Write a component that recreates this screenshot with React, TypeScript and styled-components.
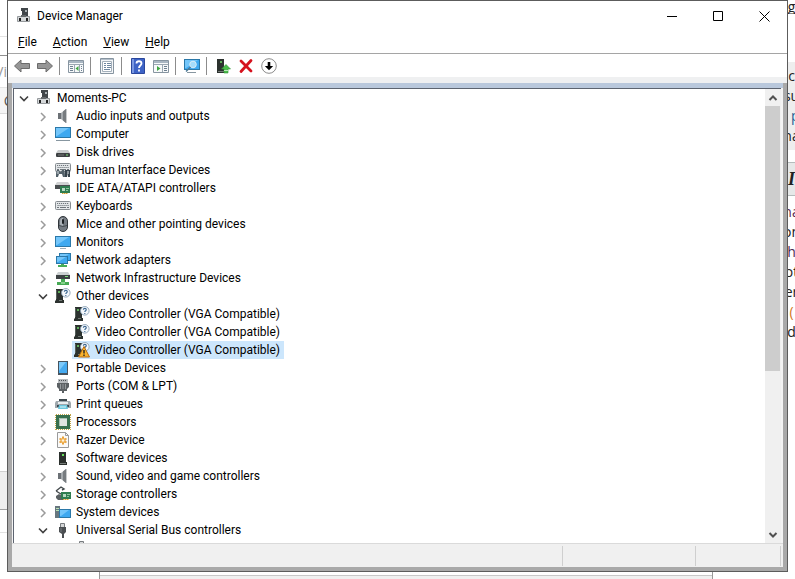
import React from "react";
import styled, { createGlobalStyle, css } from "styled-components";

const GlobalStyle = createGlobalStyle`
  *, *::before, *::after { box-sizing: border-box; }
  body {
    margin: 0;
    background: #fff;
    color: #000;
    font: 12px/18px Roboto, "Open Sans", sans-serif;
  }
  button {
    padding: 0;
    border: 0;
    background: none;
    color: inherit;
    font: inherit;
  }
  ul { margin: 0; padding: 0; list-style: none; }
  svg { display: block; flex: none; }
`;

/* ---------- desktop behind the window ---------- */

const Desktop = styled.div`
  display: grid;
  grid-template:
    "left window right" minmax(0, 1fr)
    "left beneath right" 7px
    / 7px minmax(0, 1fr) 7px;
  height: 100vh;
  overflow: hidden;
`;

const Gutter = styled.div<{ $side: "left" | "right" }>`
  display: flex;
  flex-direction: column;
  grid-area: ${(p) => p.$side};
  overflow: hidden;
`;

const Band = styled.div<{ $h: number; $bg?: string; $line?: string }>`
  display: flex;
  flex: none;
  flex-direction: column;
  justify-content: center;
  align-items: stretch;
  height: ${(p) => p.$h}px;
  background: ${(p) => p.$bg ?? "#fff"};
  border-bottom: ${(p) => (p.$line ? `1px solid ${p.$line}` : "0")};
`;

const Fragment = styled.span<{ $color?: string; $align?: string; $title?: boolean }>`
  display: flex;
  justify-content: ${(p) => p.$align ?? "center"};
  color: ${(p) => p.$color ?? "#222"};
  font: 14px/20px "Open Sans", sans-serif;
  white-space: nowrap;
  ${(p) =>
    p.$title &&
    css`
      font: italic bold 18px/20px "Liberation Serif", serif;
    `}
`;

const Beneath = styled.div`
  grid-area: beneath;
  margin: 0 75px 0 92px;
  border: solid #999;
  border-width: 0 1px;
  padding-top: 3px;
`;

const BeneathBar = styled.div`
  height: 4px;
  border-top: 1px solid #c8c8c8;
  background: #f0f0f0;
`;

/* ---------- window ---------- */

const Window = styled.main`
  display: flex;
  flex-direction: column;
  grid-area: window;
  min-height: 0;
  border: 1px solid #5c5c5c;
  background: #fff;
`;

const TitleBar = styled.header`
  display: flex;
  align-items: center;
  flex: none;
  gap: 5px;
  height: 30px;
  padding-left: 8px;
`;

const Title = styled.h1`
  flex: 1;
  margin: 0;
  font-size: 12px;
  font-weight: 400;
`;

const Caption = styled.div`
  display: flex;
  align-self: stretch;
`;

const CaptionButton = styled.button`
  display: grid;
  place-items: center;
  width: 46px;
`;

const MenuBar = styled.nav`
  display: flex;
  flex: none;
  align-items: center;
  gap: 16px;
  height: 23px;
  padding-left: 10px;
  border-bottom: 1px solid #a5a5a5;
`;

const MenuItem = styled.button`
  &::first-letter { text-decoration: underline; }
`;

const ToolBar = styled.div`
  display: flex;
  flex: none;
  align-items: center;
  height: 29px;
  padding: 0 2px;
  border-bottom: 6px solid #eff0f1;
`;

const Tool = styled.button`
  display: grid;
  place-items: center;
  width: 23px;
  height: 23px;
`;

const ToolDivider = styled.span`
  width: 1px;
  height: 18px;
  margin: 0 4px 0 3px;
  background: #8c8c8c;
`;

const Frame = styled.div`
  display: flex;
  flex: 1;
  flex-direction: column;
  min-height: 0;
  padding: 0 4px 4px;
  background: #a9a9a9;
`;

const Pane = styled.div`
  display: flex;
  flex: 1;
  min-height: 0;
  padding: 0 2px 0 1px;
  border-top: 5px solid #b9c8dc;
  background: #f4f4f4;
`;

const TreeBox = styled.div`
  display: flex;
  flex: 1;
  min-width: 0;
  border: solid #5d6470;
  border-width: 1px 0 0 1px;
  background: #fff;
`;

const Tree = styled.ul`
  flex: 1;
  min-width: 0;
  overflow: hidden;
`;

const TreeRow = styled.li<{ $level: number }>`
  display: flex;
  height: 18px;
  padding-left: ${(p) => p.$level * 19}px;
`;

const Expander = styled.button`
  display: grid;
  place-items: center;
  width: 20px;
  padding-top: 2px;
`;

const ExpanderSpace = styled.span`
  width: 20px;
`;

const Node = styled.span<{ $selected?: boolean }>`
  display: flex;
  align-items: center;
  gap: 5px;
  padding: 0 4px 0 2px;
  background: ${(p) => (p.$selected ? "#cce6fc" : "transparent")};
  white-space: nowrap;
`;

const ScrollBar = styled.div`
  display: flex;
  flex: none;
  flex-direction: column;
  width: 16px;
  background: #f0f0f0;
`;

const ScrollButton = styled.button`
  display: grid;
  flex: none;
  place-items: center;
  height: 17px;
`;

const Track = styled.div`
  flex: 1;
  min-height: 0;
`;

const Thumb = styled.div`
  width: 15px;
  height: 63%;
  background: #cdcdcd;
`;

const StatusBar = styled.footer`
  display: grid;
  grid-template-columns: minmax(0, 1fr) 133px 85px;
  flex: none;
  height: 24px;
  padding: 2px 2px 1px 0;
  border-top: 1px solid #dadada;
  background: #f0f0f0;
`;

const StatusCell = styled.span`
  border-right: 1px solid #cfcfcf;
`;

/* ---------- icons ---------- */

const Icon = ({ children, size = 16 }: { children: React.ReactNode; size?: number }) => (
  <svg width={size} height={size} viewBox="0 0 16 16" aria-hidden="true">
    {children}
  </svg>
);

const Screen = ({ x, y, w, h }: { x: number; y: number; w: number; h: number }) => (
  <>
    <rect x={x + 0.5} y={y + 0.5} width={w - 1} height={h - 1} fill="#3fa9f0" stroke="#2b78a8" />
    <path d={`M${x + 1} ${y + 1}h${w - 3}L${x + 2} ${y + h - 2}h-1z`} fill="#74c6fa" />
  </>
);

const Tower = () => (
  <>
    <path d="M1 1h7v11h1v3H0v-2l1-1z" fill="#2c322f" />
    <path d="M1.500 2v9" stroke="#56605a" />
    <path d="M3 3h2v2H3z" fill="#5fae5a" />
    <path d="M4 12h3v1H4z" fill="#737b76" />
  </>
);

const Question = () => (
  <>
    <circle cx="10.800" cy="4.800" r="4.300" fill="#f4f8fc" stroke="#8ba1b4" strokeWidth=".9" />
    <path d="M9.300 3.700c.1-1.800 3-1.800 3 0 0 1.100-1.500 1.100-1.500 2.300M10.800 6.900v1" fill="none" stroke="#3c6791" strokeWidth="1.100" />
  </>
);

const Drive = ({ y = 6 }: { y?: number }) => (
  <>
    <path d={`M3 ${y}h10l2 3H1z`} fill="#c9cccd" />
    <rect x="1" y={y + 3} width="14" height="4" rx="1" fill="#3c4042" />
    <path d={`M3 ${y + 5}h6`} stroke="#777" />
    <path d={`M11 ${y + 4.5}h2v1h-2z`} fill="#7ee07a" />
  </>
);

const Keys = ({ y }: { y: number }) => (
  <>
    <rect x=".5" y={y + 0.5} width="15" height="8" rx="1" fill="#e4e7e9" stroke="#868c91" />
    <path
      d={`M2 ${y + 2.5}h12M2.500 ${y + 4.5}h12`}
      stroke="#6f767c"
      strokeDasharray="1.200 .8"
    />
    <path d={`M2 ${y + 6.5}h2m1 0h6m1 0h2`} stroke="#6f767c" />
  </>
);

const Board = ({ x, y }: { x: number; y: number }) => (
  <>
    <rect x={x} y={y} width="10" height="7" fill="#2f7d50" />
    <path d={`M${x + 2} ${y + 2}h3v3h-3z`} fill="#b8d9c4" />
    <path d={`M${x + 6} ${y + 2.5}h3M${x + 6} ${y + 4.5}h2`} stroke="#8cc59d" />
    <path d={`M${x + 2} ${y + 7.5}h6`} stroke="#d9a032" strokeDasharray="1.500 .5" />
  </>
);

const icons: Record<string, React.ReactNode> = {
  pc: (
    <>
      <path d="M5 0h7v9H6V3H5z" fill="#41464a" />
      <path d="M9 2h2v2H9z" fill="#a9b0b3" />
      <path d="M1.500 8.500h12v5h-12z" fill="#d5d8da" stroke="#95999c" />
      <path d="M3 10h2v3H3zM10 10h2v3h-2z" fill="#222" />
      <path d="M5 7h5v2H5z" fill="#65696c" />
    </>
  ),
  speaker: (
    <>
      <path d="M3 5h3v6H3z" fill="#6c7176" />
      <path d="M6 5l5-4v14l-5-4z" fill="#a5aaae" />
      <path d="M8 3.500L11 1v14L8 12.500z" fill="#777c80" />
      <path d="M11.500 1v14" stroke="#c7cacc" />
    </>
  ),
  computer: (
    <>
      <Screen x={0} y={1} w={16} h={11} />
      <path d="M1 14.500h14" stroke="#8796a0" />
    </>
  ),
  disk: <Drive />,
  hid: (
    <>
      <Keys y={1} />
      <path d="M1 15c0-7 1-8 3-7l1 2h1l1-2c2-1 3 0 3 7H8l-1-3H4l-1 3z" fill="#53616a" />
      <path d="M10 8h5v7h-2l-1-4v4h-2z" fill="#36434c" />
      <path d="M3 9v3M13 9v3" stroke="#e1e7ea" />
    </>
  ),
  ide: (
    <>
      <path d="M2 2h11l2 3H0z" fill="#d0d2d3" />
      <path d="M0 5h15v4H0z" fill="#4a4e50" />
      <Board x={5} y={6} />
    </>
  ),
  keyboard: <Keys y={3} />,
  mouse: (
    <>
      <rect x="3.500" y=".5" width="9" height="15" rx="4.500" fill="#747b82" stroke="#30353a" />
      <path d="M5 8c0-4 0-6 3-6v8c-2 0-3-1-3-2z" fill="#a9b0b6" />
      <rect x="7" y="3" width="2" height="5" rx="1" fill="#1e2225" />
      <path d="M4 9.500q4 2 8 0" fill="none" stroke="#454b50" />
    </>
  ),
  monitor: (
    <>
      <Screen x={0} y={2} w={16} h={11} />
      <path d="M5 14.500h6" stroke="#9dadb7" />
    </>
  ),
  network: (
    <>
      <Screen x={4} y={1} w={12} h={8} />
      <Screen x={1} y={4} w={12} h={8} />
      <path d="M6 12h3v1h3v2H3v-2h3z" fill="#47ad58" />
    </>
  ),
  infra: (
    <>
      <path d="M3 2h10l2 3H1z" fill="#cbd0d1" />
      <path d="M1 5h14v4H1z" fill="#3c4143" />
      <path d="M10 6.500h3" stroke="#7ee07a" />
      <path d="M6 9h4v3h4v3H2v-3h4z" fill="#46a954" />
      <path d="M6 12h4v2H6z" fill="#84d18b" />
    </>
  ),
  unknown: (
    <>
      <Tower />
      <Question />
    </>
  ),
  warning: (
    <>
      <Tower />
      <Question />
      <path d="M10 4.500L15.500 15h-11z" fill="#f9b32c" stroke="#b4690e" strokeLinejoin="round" />
      <path d="M10 8v3.500M10 12.500v1.500" stroke="#222" strokeWidth="1.400" />
    </>
  ),
  portable: (
    <>
      <rect x="3.500" y="1.500" width="9" height="13" fill="#45aaf0" stroke="#46535e" />
      <path d="M4 2h7L4 11z" fill="#7cc9fa" />
      <path d="M4 13.500h8" stroke="#46535e" />
    </>
  ),
  ports: (
    <>
      <path d="M3 1h10v4H3z" fill="#b6babd" />
      <path d="M4 2.500h8" stroke="#4e5356" strokeDasharray="1 1" />
      <path d="M2 5h12v4l-2 2v2H9v2H7v-2H4v-2L2 9z" fill="#5c6164" />
      <path d="M5.500 6v5M8 6v5M10.500 6v5" stroke="#969b9e" />
    </>
  ),
  printer: (
    <>
      <path d="M4 3h8v3H4z" fill="#3e494f" />
      <path d="M1 5h14l1 2v5H0V7z" fill="#9fa8ad" />
      <path d="M3 6h10v2H3z" fill="#e9eef0" />
      <path d="M2 9h12v2H2z" fill="#39454c" />
      <path d="M4 9h8l1 4H3z" fill="#6bc7dd" />
      <path d="M5 11h6" stroke="#e0f6fb" />
    </>
  ),
  cpu: (
    <>
      <path d="M.5 1v15M15.500 1v15M1 .5h15M1 15.500h15" stroke="#c0a345" strokeDasharray="1 1" />
      <rect x="1" y="1" width="14" height="14" fill="#37704e" />
      <rect x="4" y="4" width="8" height="8" fill="#dfe4e1" />
      <path d="M4.500 12V4.500H12" fill="none" stroke="#a8c0b0" />
    </>
  ),
  gear: (
    <>
      <path d="M2.500.5h8l3 3v12h-11z" fill="#fafafa" stroke="#9a9a9a" />
      <path d="M10.500.5v3h3" fill="none" stroke="#9a9a9a" />
      <path d="M8 4.500v8M4.500 6.500l7 4M11.500 6.500l-7 4" stroke="#e7a13b" strokeWidth="2" />
      <circle cx="8" cy="8.500" r="2.600" fill="#eeb052" />
      <circle cx="8" cy="8.500" r="1.200" fill="#fff3dc" />
    </>
  ),
  software: (
    <>
      <path d="M4 2h7v10h1v3H4z" fill="#2b302d" />
      <path d="M7 4h2v2H7z" fill="#69e05c" />
      <path d="M5 13.500h6" stroke="#777d79" />
    </>
  ),
  storage: (
    <>
      <path d="M1 5l5-4 3 2-2 1M1 5l5 3 2-1" fill="none" stroke="#444a4d" strokeWidth="1.400" />
      <path d="M1 10l3-2 5 3v3H3l-2-2z" fill="#5a6063" />
      <Board x={6} y={6} />
    </>
  ),
  system: (
    <>
      <path d="M0 2h5v12H0z" fill="#68777f" />
      <path d="M1 4.500h3M1 6.500h3" stroke="#b6e2b4" />
      <Screen x={4} y={5} w={12} h={9} />
    </>
  ),
  usb: (
    <>
      <path d="M5.500 1.500h4v4h-4z" fill="#d5d7d8" stroke="#777b7e" />
      <path d="M4 5h7v5l-2 2v4H7v-4l-3-2z" fill="#4b4f52" />
      <path d="M6 6v4" stroke="#777c80" />
    </>
  ),
  back: (
    <path d="M.5 8L7 2v3.500h8.500v5H7V14z" fill="#969696" stroke="#6b6b6b" strokeLinejoin="round" />
  ),
  forward: (
    <path d="M15.500 8L9 2v3.500H.5v5H9V14z" fill="#969696" stroke="#6b6b6b" strokeLinejoin="round" />
  ),
  showTree: (
    <>
      <path d="M.5 2.500h15v12H.5z" fill="#f7f9fa" stroke="#8795a1" />
      <path d="M1 3h14v2H1z" fill="#a9b6c2" />
      <path d="M1 6.500h14M6.500 7v7M11.500 7v7" stroke="#9aa7b2" />
      <path d="M2 8.500h3M2 10.500h3M2 12.500h3M13 8.500h1M13 10.500h1M13 12.500h1" stroke="#6d7f90" />
      <path d="M10.500 8v5L7.500 10.500z" fill="#3ea640" />
    </>
  ),
  properties: (
    <>
      <path d="M1.500.5h13v15h-13z" fill="#f4f6f8" stroke="#8795a1" />
      <path d="M3.500 3.500h9v10h-9z" fill="#fff" stroke="#a4b0bb" />
      <path d="M5 5.500h2m1 0h4M5 7.500h2m1 0h4M5 9.500h2m1 0h4M5 11.500h6" stroke="#6f87a0" />
      <path d="M2 1.500h12" stroke="#b4bfca" />
    </>
  ),
  help: (
    <>
      <path d="M1.500.5h13v15h-13z" fill="#3d63c6" stroke="#2b479c" />
      <path d="M2 1h2v14H2z" fill="#7a98e2" />
      <path d="M6.500 5.500c0-3 5-3 5 0 0 2-2.500 2-2.500 4.500M9 11.500v2" fill="none" stroke="#fff" strokeWidth="1.800" />
    </>
  ),
  action: (
    <>
      <path d="M.5 2.500h15v12H.5z" fill="#f7f9fa" stroke="#8795a1" />
      <path d="M1 3h14v2H1z" fill="#a9b6c2" />
      <path d="M1 6.500h14M9.500 7v7" stroke="#9aa7b2" />
      <path d="M11 8.500h3M11 10.500h3M11 12.500h3" stroke="#6d7f90" />
      <path d="M4 8v5l3.500-2.500z" fill="#3ea640" />
    </>
  ),
  scan: (
    <>
      <Screen x={0} y={1} w={16} h={11} />
      <path d="M3 14.500h9" stroke="#8796a0" />
      <circle cx="9" cy="6.500" r="3.300" fill="#a5dcfb" stroke="#d8ecf7" />
      <path d="M6.500 9L2 13.500" stroke="#4c7895" strokeWidth="1.500" />
    </>
  ),
  update: (
    <>
      <path d="M2 1h7v11h1v3H2z" fill="#2c322f" />
      <path d="M5 3h2v2H5z" fill="#5fae5a" />
      <path d="M3 13.500h6" stroke="#777d79" />
      <path d="M11 6.500l4.500 4.500H13v4H9v-4H6.500z" fill="#4bbd4b" stroke="#2f9434" strokeWidth=".6" />
      <path d="M9 12.500h4" stroke="#b8edb6" />
    </>
  ),
  remove: <path d="M3 3l10 10M13 2.500L3 13.500" stroke="#d5121e" strokeWidth="2.800" strokeLinecap="round" />,
  disable: (
    <>
      <circle cx="8" cy="8" r="7.300" fill="#fff" stroke="#8b8b8b" />
      <path d="M8 4v4.500" stroke="#000" strokeWidth="2.600" />
      <path d="M3.800 8h8.400L8 12.200z" fill="#000" />
    </>
  ),
};

const ChevronRight = () => (
  <svg width="8" height="10" viewBox="0 0 8 10" aria-hidden="true">
    <path d="M2 1l4 4-4 4" fill="none" stroke="#9b9b9b" strokeWidth="1.500" />
  </svg>
);

const ChevronDown = () => (
  <svg width="10" height="8" viewBox="0 0 10 8" aria-hidden="true">
    <path d="M1 1.500l4 4 4-4" fill="none" stroke="#404040" strokeWidth="1.600" />
  </svg>
);

const ScrollArrow = ({ up }: { up?: boolean }) => (
  <svg width="10" height="8" viewBox="0 0 10 8" aria-hidden="true">
    <path d={up ? "M1.500 6L5 2.500 8.500 6" : "M1.500 2L5 5.500 8.500 2"} fill="none" stroke="#505050" strokeWidth="2" />
  </svg>
);

/* ---------- data ---------- */

type Device = { label: string; icon: string; level: number; open?: boolean; selected?: boolean };

const category = (label: string, icon: string, open = false): Device => ({ label, icon, level: 1, open });
const vga = "Video Controller (VGA Compatible)";

const devices: Device[] = [
  { label: "Moments-PC", icon: "pc", level: 0, open: true },
  category("Audio inputs and outputs", "speaker"),
  category("Computer", "computer"),
  category("Disk drives", "disk"),
  category("Human Interface Devices", "hid"),
  category("IDE ATA/ATAPI controllers", "ide"),
  category("Keyboards", "keyboard"),
  category("Mice and other pointing devices", "mouse"),
  category("Monitors", "monitor"),
  category("Network adapters", "network"),
  category("Network Infrastructure Devices", "infra"),
  category("Other devices", "unknown", true),
  { label: vga, icon: "unknown", level: 2 },
  { label: vga, icon: "unknown", level: 2 },
  { label: vga, icon: "warning", level: 2, selected: true },
  category("Portable Devices", "portable"),
  category("Ports (COM & LPT)", "ports"),
  category("Print queues", "printer"),
  category("Processors", "cpu"),
  category("Razer Device", "gear"),
  category("Software devices", "software"),
  category("Sound, video and game controllers", "speaker"),
  category("Storage controllers", "storage"),
  category("System devices", "system"),
  category("Universal Serial Bus controllers", "usb", true),
  { label: "", icon: "usb", level: 2 },
];

const toolGroups: [string, string][][] = [
  [["back", "Back"], ["forward", "Forward"]],
  [["showTree", "Show or hide console tree"]],
  [["properties", "Properties"]],
  [["help", "Help"], ["action", "Show or hide action pane"]],
  [["scan", "Scan for hardware changes"]],
  [["update", "Update driver"], ["remove", "Uninstall device"], ["disable", "Disable device"]],
];

export default function App() {
  return (
    <>
      <GlobalStyle />
      <Desktop>
        <Gutter $side="left" aria-hidden="true">
          <Band $h={37} $line="#e2e2e2" />
          <Band $h={19} $line="#8f8f8f" />
          <Band $h={32} $line="#e4e4e4">
            <Fragment $color="#999" $align="flex-end">Vi</Fragment>
          </Band>
          <Band $h={26} $bg="#f5f5f5" $line="#dcdcdc">
            <Fragment $color="#555" $align="flex-start">&nbsp;C</Fragment>
          </Band>
          <Band $h={358} $line="#d0d0d0" />
          <Band $h={38} $bg="#eeeeee" $line="#a0a0a0" />
          <Band $h={23} $line="#e2e2e2" />
        </Gutter>

        <Window>
          <TitleBar>
            <Icon>{icons.pc}</Icon>
            <Title>Device Manager</Title>
            <Caption>
              <CaptionButton aria-label="Minimize">
                <svg width="11" height="11" viewBox="0 0 11 11">
                  <path d="M0 5.500h10" stroke="#000" />
                </svg>
              </CaptionButton>
              <CaptionButton aria-label="Maximize">
                <svg width="11" height="11" viewBox="0 0 11 11">
                  <path d="M.5.5h9v9h-9z" fill="none" stroke="#000" />
                </svg>
              </CaptionButton>
              <CaptionButton aria-label="Close">
                <svg width="11" height="11" viewBox="0 0 11 11">
                  <path d="M.5.5l10 10M10.500.5l-10 10" stroke="#000" />
                </svg>
              </CaptionButton>
            </Caption>
          </TitleBar>

          <MenuBar aria-label="Menu">
            {["File", "Action", "View", "Help"].map((name) => (
              <MenuItem key={name}>{name}</MenuItem>
            ))}
          </MenuBar>

          <ToolBar role="toolbar">
            {toolGroups.map((group, i) => (
              <React.Fragment key={group[0][0]}>
                {i > 0 && <ToolDivider />}
                {group.map(([icon, label]) => (
                  <Tool key={icon} aria-label={label}>
                    <Icon>{icons[icon]}</Icon>
                  </Tool>
                ))}
              </React.Fragment>
            ))}
          </ToolBar>

          <Frame>
            <Pane>
              <TreeBox>
                <Tree role="tree">
                  {devices.map((d, i) => (
                    <TreeRow key={i} $level={d.level} role="treeitem" aria-selected={!!d.selected}>
                      {d.level < 2 ? (
                        <Expander aria-label={`Toggle ${d.label}`} aria-expanded={!!d.open}>
                          {d.open ? <ChevronDown /> : <ChevronRight />}
                        </Expander>
                      ) : (
                        <ExpanderSpace />
                      )}
                      <Node $selected={d.selected}>
                        <Icon>{icons[d.icon]}</Icon>
                        {d.label}
                      </Node>
                    </TreeRow>
                  ))}
                </Tree>
                <ScrollBar>
                  <ScrollButton aria-label="Scroll up"><ScrollArrow up /></ScrollButton>
                  <Track><Thumb /></Track>
                  <ScrollButton aria-label="Scroll down"><ScrollArrow /></ScrollButton>
                </ScrollBar>
              </TreeBox>
            </Pane>
            <StatusBar>
              <StatusCell />
              <StatusCell />
              <StatusCell />
            </StatusBar>
          </Frame>
        </Window>

        <Gutter $side="right" aria-hidden="true">
          <Band $h={14} $line="#8a8a8a">
            <Fragment>g</Fragment>
          </Band>
          <Band $h={48} />
          <Band $h={88} $bg="#eeeeee">
            <Fragment>c</Fragment>
            <Fragment>su</Fragment>
            <Fragment $color="#1d5f93">) p</Fragment>
            <Fragment>na</Fragment>
          </Band>
          <Band $h={13} $line="#b5bcbc" />
          <Band $h={33} $bg="#e6e8e8" $line="#b5bcbc">
            <Fragment $title>I</Fragment>
          </Band>
          <Band $h={6} />
          <Band $h={140}>
            <Fragment $color="#5a2a50">na</Fragment>
            <Fragment>on</Fragment>
            <Fragment $color="#4a2a50">h</Fragment>
            <Fragment>ot</Fragment>
            <Fragment>er</Fragment>
            <Fragment $color="#d5761c">(</Fragment>
            <Fragment>d</Fragment>
          </Band>
        </Gutter>

        <Beneath>
          <BeneathBar />
        </Beneath>
      </Desktop>
    </>
  );
}
